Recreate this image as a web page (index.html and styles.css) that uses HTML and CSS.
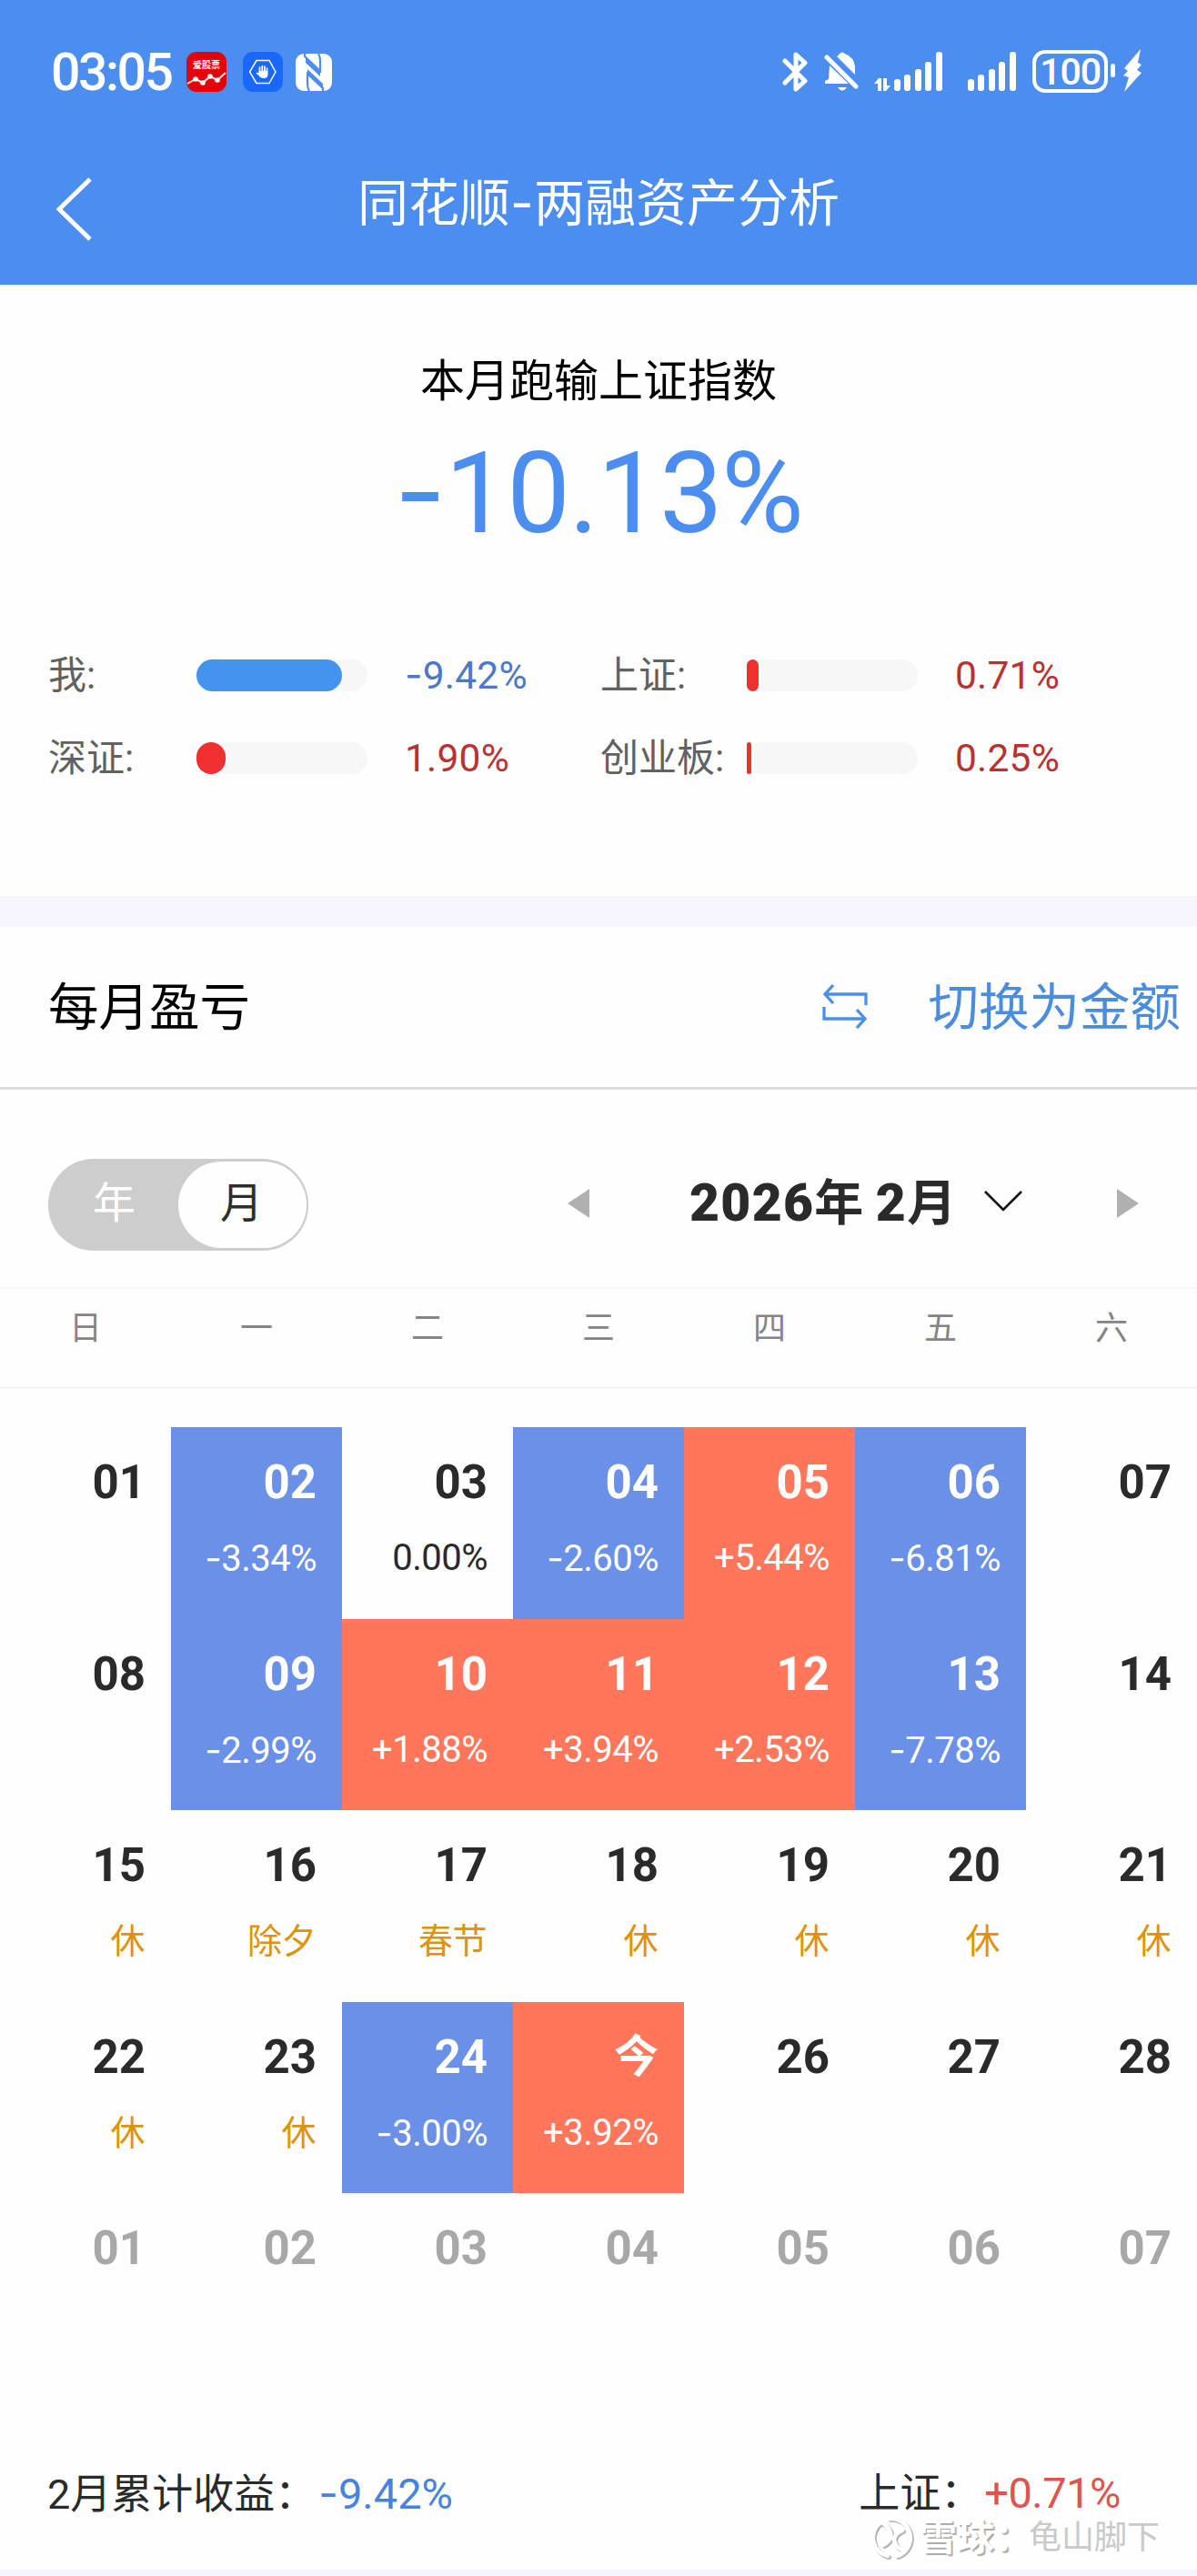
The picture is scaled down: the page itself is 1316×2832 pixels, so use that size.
FILE: index.html
```
<!DOCTYPE html>
<html lang="zh-CN">
<head>
    <meta charset="UTF-8">
    <title>同花顺-两融资产分析</title>
    <link rel="stylesheet" href="styles.css">
</head>
<body>
    <header class="header">
        <div class="status-bar">
            <span class="time">03:05</span>
            <svg class="app-icon" width="44" height="44" viewBox="0 0 44 44">
                <rect width="44" height="44" rx="11" fill="#e60009"/>
                <text x="22" y="18" class="app-name">爱股票</text>
                <path d="M1 35 L10 30 L18 34 L26 27 L34 31 L43 23" fill="none" stroke="#ffe9e4" stroke-width="2"/>
                <g fill="#fff"><circle cx="10" cy="30" r="2.8"/><circle cx="18" cy="34" r="2.8"/><circle cx="26" cy="27" r="2.8"/><circle cx="34" cy="31" r="2.8"/></g>
            </svg>
            <svg class="hand-icon" width="44" height="44" viewBox="0 0 44 44">
                <rect width="44" height="44" rx="11" fill="#1967fb"/>
                <path d="M15 9.500 H29 L36 22 L29 34.500 H15 L7.500 22Z" fill="none" stroke="#fff" stroke-width="1.500"/>
                <path d="M18.500 23 V17 M21.300 23 V15.500 M24 23 V16 M26.500 24 V18" stroke="#fff" stroke-width="1.700" stroke-linecap="round"/>
                <path d="M17.500 21 H27.400 V26 Q27 29 23 29 Q19 29 17.500 26 L14.500 23.500 Q15 22 17.500 23.500Z" fill="#fff"/>
            </svg>
            <svg class="nfc-icon" width="40" height="41" viewBox="0 0 40 41">
                <rect width="40" height="41" rx="9" fill="#fff"/>
                <path d="M10 0 V3 L27 19 V9 Q27 3 25 0 M30 41 V38 L13 22 V32 Q13 38 15 41" fill="none" stroke="#4b8eef" stroke-width="2.200"/>
                <path d="M11 4 L27 19 V25 L11 10Z M13 17 L30 33 V39 L13 23Z" fill="#4b8eef"/>
            </svg>
            <svg class="bluetooth" width="28" height="44" viewBox="0 0 28 44">
                <path d="M3 10 L25 32 L15 41 V3 L25 12 L3 34" fill="none" stroke="#fff" stroke-width="5" stroke-linecap="round" stroke-linejoin="round"/>
            </svg>
            <svg class="bell" width="38" height="44" viewBox="0 0 38 44">
                <path d="M14 5 Q16 4 17 2 Q20 -1 23 2 Q33 6 34 16 V25Z M6 15 L27 35 H1 V32 L5 30Z M15 39 H25 Q20 46 15 39Z" fill="#fff"/>
                <path d="M3 6 L35 38" stroke="#fff" stroke-width="5" stroke-linecap="round"/>
            </svg>
            <svg class="signal-data" width="77" height="44" viewBox="0 0 77 44">
                <path d="M1 35 L6 29 H9 V43 H5 V35Z M11 29 H15 V37 H19 L14 43 H11Z" fill="#fff"/>
                <g fill="#fff"><rect x="23" y="30" width="7" height="13" rx="3"/><rect x="34" y="25" width="7" height="18" rx="3"/><rect x="46" y="19" width="7" height="24" rx="3"/><rect x="57" y="11" width="7" height="32" rx="3"/><rect x="69" y="0" width="7" height="43" rx="3"/></g>
            </svg>
            <svg class="signal" width="54" height="44" viewBox="0 0 54 44">
                <g fill="#fff"><rect x="0" y="30" width="7" height="13" rx="3"/><rect x="11" y="25" width="7" height="18" rx="3"/><rect x="23" y="19" width="7" height="24" rx="3"/><rect x="34" y="11" width="7" height="32" rx="3"/><rect x="46" y="0" width="7" height="43" rx="3"/></g>
            </svg>
            <span class="battery">100</span>
            <span class="battery-tip"></span>
            <svg class="bolt" width="21" height="48" viewBox="0 0 21 48">
                <path d="M19 0 L1 21 L5 24 L0 29 L6 31 L1 47 L20 26 L15 23 L20 17 L16 15Z" fill="#fff"/>
            </svg>
        </div>
        <div class="nav-bar">
            <svg class="back" width="40" height="70" viewBox="0 0 40 70">
                <path d="M37 2 L3 35 L37 68" fill="none" stroke="#fff" stroke-width="5"/>
            </svg>
            <h1>同花顺<span class="minus">-</span>两融资产分析</h1>
        </div>
    </header>

    <section class="summary">
        <div class="summary-title">本月跑输上证指数</div>
        <div class="summary-value"><span class="minus">-</span>10.13%</div>
        <div class="compare">
            <span class="name">我:</span>
            <div class="bar"><div class="fill blue" style="width: 160px"></div></div>
            <span class="value down"><span class="minus">-</span>9.42%</span>
            <span class="name">上证:</span>
            <div class="bar"><div class="fill red" style="width: 13px"></div></div>
            <span class="value up">0.71%</span>
            <span class="name">深证:</span>
            <div class="bar"><div class="fill red" style="width: 32px"></div></div>
            <span class="value up">1.90%</span>
            <span class="name">创业板:</span>
            <div class="bar"><div class="fill red" style="width: 5px"></div></div>
            <span class="value up">0.25%</span>
        </div>
    </section>

    <section class="profit">
        <div class="section-head">
            <h2>每月盈亏</h2>
            <svg class="swap" width="50" height="50" viewBox="0 0 50 50">
                <path d="M12 2 L3 12 L12 22 M3 12 H48 V24 M38 29 L47 39 L38 49 M47 39 H2 V26" fill="none" stroke="#4a90e8" stroke-width="3.300"/>
            </svg>
            <span class="switch-text">切换为金额</span>
        </div>

        <div class="toolbar">
            <div class="toggle">
                <span>年</span>
                <span class="active">月</span>
            </div>
            <div class="arrow-left"></div>
            <div class="month"><b>2026</b>年 <b>2</b>月</div>
            <svg class="chevron" width="42" height="26" viewBox="0 0 42 26">
                <path d="M1 2 L21 22 L41 2" fill="none" stroke="#111" stroke-width="2.600"/>
            </svg>
            <div class="arrow-right"></div>
        </div>

        <div class="weekdays">
            <span>日</span><span>一</span><span>二</span><span>三</span><span>四</span><span>五</span><span>六</span>
        </div>

        <div class="calendar">
            <div class="day"><b>01</b></div>
            <div class="day loss"><b>02</b><span><i class="minus">-</i>3.34%</span></div>
            <div class="day"><b>03</b><span>0.00%</span></div>
            <div class="day loss"><b>04</b><span><i class="minus">-</i>2.60%</span></div>
            <div class="day gain"><b>05</b><span>+5.44%</span></div>
            <div class="day loss"><b>06</b><span><i class="minus">-</i>6.81%</span></div>
            <div class="day"><b>07</b></div>

            <div class="day"><b>08</b></div>
            <div class="day loss"><b>09</b><span><i class="minus">-</i>2.99%</span></div>
            <div class="day gain"><b>10</b><span>+1.88%</span></div>
            <div class="day gain"><b>11</b><span>+3.94%</span></div>
            <div class="day gain"><b>12</b><span>+2.53%</span></div>
            <div class="day loss"><b>13</b><span><i class="minus">-</i>7.78%</span></div>
            <div class="day"><b>14</b></div>

            <div class="day rest"><b>15</b><span>休</span></div>
            <div class="day rest"><b>16</b><span>除夕</span></div>
            <div class="day rest"><b>17</b><span>春节</span></div>
            <div class="day rest"><b>18</b><span>休</span></div>
            <div class="day rest"><b>19</b><span>休</span></div>
            <div class="day rest"><b>20</b><span>休</span></div>
            <div class="day rest"><b>21</b><span>休</span></div>

            <div class="day rest"><b>22</b><span>休</span></div>
            <div class="day rest"><b>23</b><span>休</span></div>
            <div class="day loss"><b>24</b><span><i class="minus">-</i>3.00%</span></div>
            <div class="day gain"><b class="today">今</b><span>+3.92%</span></div>
            <div class="day"><b>26</b></div>
            <div class="day"><b>27</b></div>
            <div class="day"><b>28</b></div>

            <div class="day other"><b>01</b></div>
            <div class="day other"><b>02</b></div>
            <div class="day other"><b>03</b></div>
            <div class="day other"><b>04</b></div>
            <div class="day other"><b>05</b></div>
            <div class="day other"><b>06</b></div>
            <div class="day other"><b>07</b></div>
        </div>

        <div class="total">
            <div class="total-mine">2月累计收益：<span class="total-down"><span class="minus">-</span>9.42%</span></div>
            <div class="total-index">上证：<span class="total-up">+0.71%</span></div>
        </div>
    </section>

    <div class="watermark">
        <svg width="50" height="50" viewBox="0 0 50 50">
            <g fill="none" stroke-linecap="round">
                <path d="M20 45 A21 21 0 0 1 12 8 M22 4 A21 21 0 0 1 30 45 M13 8 Q25 14 23 25 Q21 30 15 33 M36 17 Q28 20 27 27 Q28 36 38 39" stroke="#b5b5b5" stroke-width="5" transform="translate(1.500 1.500)"/>
                <path d="M20 45 A21 21 0 0 1 12 8 M22 4 A21 21 0 0 1 30 45 M13 8 Q25 14 23 25 Q21 30 15 33 M36 17 Q28 20 27 27 Q28 36 38 39" stroke="#fff" stroke-width="4.500"/>
            </g>
        </svg>
        <span class="brand">雪球：</span>
        <span class="author">龟山脚下</span>
    </div>
</body>
</html>
```
FILE: styles.css
```
* {
    box-sizing: border-box;
}

body {
    position: relative;
    width: 1316px;
    height: 2832px;
    margin: 0;
    overflow: hidden;
    background-color: #fefefe;
    color: #2a2a2a;
    font-family: Roboto, "Noto Sans CJK SC", sans-serif;
}

svg {
    display: block;
    flex: none;
}

.minus {
    font-family: Inter, sans-serif;
    font-style: normal;
}

.header {
    height: 313px;
    background-color: #4b8eef;
    color: #fff;
}

.status-bar {
    display: flex;
    align-items: flex-start;
    height: 157px;
    padding: 57px 60px 0 56px;
}

.time {
    width: 150px;
    margin-top: -7px;
    font-size: 57px;
    font-weight: 500;
    line-height: 60px;
    letter-spacing: -2.4px;
}

.app-name {
    fill: #fff;
    font-size: 10px;
    font-weight: bold;
    text-anchor: middle;
}

.hand-icon {
    margin-left: 18px;
}

.nfc-icon {
    margin: 2px 0 0 14px;
}

.bluetooth {
    margin-left: 495px;
}

.bell {
    margin-left: 18px;
}

.signal-data {
    margin-left: 16px;
}

.signal {
    margin-left: 27px;
}

.battery {
    width: 83px;
    height: 47px;
    margin: -2px 0 0 17px;
    border: 4px solid #fff;
    border-radius: 14px;
    font-size: 41px;
    font-weight: 500;
    line-height: 40px;
    letter-spacing: -1px;
    text-align: center;
}

.battery-tip {
    width: 5px;
    height: 15px;
    margin: 13px 0 0 3px;
    border-radius: 3px;
    background-color: #fff;
}

.bolt {
    margin: -3px 0 0 9px;
}

.nav-bar {
    display: grid;
    grid-template-columns: 60px 1fr 60px;
    height: 156px;
    padding: 30px 62px 0;
}

.back {
    margin-top: 8px;
}

.nav-bar h1 {
    margin: 0;
    font-size: 56px;
    font-weight: 400;
    line-height: 72px;
    text-align: center;
}

.summary {
    height: 672px;
    padding-top: 75px;
}

.summary-title {
    color: #000;
    font-size: 49px;
    line-height: 64px;
    text-align: center;
}

.summary-value {
    margin-top: 16px;
    color: #4b8eef;
    font-size: 124px;
    line-height: 144px;
    letter-spacing: -1.5px;
    text-align: center;
}

.compare {
    display: grid;
    grid-template-columns: 163px 188px 256px 161px 188px 1fr;
    grid-auto-rows: 91px;
    align-items: center;
    margin-top: 82px;
    padding-left: 53px;
}

.name {
    color: #616161;
    font-size: 42px;
    line-height: 56px;
    white-space: nowrap;
}

.bar {
    height: 35px;
    border-radius: 18px;
    background-color: #f7f7f7;
}

.fill {
    height: 35px;
    border-radius: 18px;
}

.blue {
    background-color: #4393ef;
}

.red {
    background-color: #f03030;
}

.value {
    padding-left: 41px;
    font-size: 42.5px;
    line-height: 56px;
    letter-spacing: 0.2px;
}

.down {
    color: #4c78c8;
}

.up {
    color: #b93232;
}

.profit {
    border-top: 34px solid #f7f6fe;
}

.section-head {
    display: flex;
    align-items: center;
    height: 179px;
    padding: 0 18px 9px 53px;
    border-bottom: 3px solid #dcdcdc;
}

.section-head h2 {
    margin: 0;
    color: #000;
    font-size: 55.5px;
    font-weight: 400;
}

.swap {
    margin: 6px 0 0 auto;
}

.switch-text {
    margin-left: 66px;
    color: #4a8cdd;
    font-size: 55.5px;
}

.toolbar {
    display: flex;
    align-items: flex-start;
    height: 219px;
    padding: 76px 0 0 53px;
    border-bottom: 2px solid #f7f7f7;
}

.toggle {
    display: flex;
    width: 286px;
    height: 101px;
    padding: 3px 2px 3px 0;
    border-radius: 50px;
    background-color: #cdcdcd;
    color: #fff;
    font-size: 47px;
    line-height: 92px;
}

.toggle span {
    width: 143px;
    padding-left: 2px;
    text-align: center;
}

.toggle .active {
    width: 141px;
    padding: 0 2px 0 0;
    border-radius: 48px;
    background-color: #fefefe;
    color: #2e2e2e;
}

.arrow-left,
.arrow-right {
    width: 0;
    height: 0;
    margin-top: 33px;
    border-top: 16px solid transparent;
    border-bottom: 16px solid transparent;
}

.arrow-left {
    margin-left: 285px;
    border-right: 24px solid #b0b0b0;
}

.arrow-right {
    margin-left: 104px;
    border-left: 24px solid #b0b0b0;
}

.month {
    width: 324px;
    margin: 14px 0 0 110px;
    font-size: 54px;
    font-weight: bold;
    line-height: 70px;
    white-space: nowrap;
}

.month b {
    font-size: 57px;
    letter-spacing: 1.3px;
}

.chevron {
    margin-top: 34px;
}

.weekdays {
    display: grid;
    grid-template-columns: repeat(7, 1fr);
    height: 110px;
    border-bottom: 3px solid #f7f7f7;
    color: #858585;
    font-size: 36px;
    line-height: 88px;
    text-align: center;
}

.calendar {
    display: grid;
    grid-template-columns: repeat(7, 1fr);
    grid-auto-rows: 210.5px;
    padding-top: 42px;
}

.day {
    display: flex;
    flex-direction: column;
    align-items: flex-end;
    padding: 31px 28px 0 0;
}

.day b {
    height: 60px;
    font-size: 51px;
    font-weight: 700;
    line-height: 60px;
}

.day span {
    margin-top: 29px;
    font-size: 40px;
    line-height: 48px;
    letter-spacing: -0.5px;
}

.loss {
    background-color: #6b90e7;
    color: #fff;
}

.gain {
    background-color: #ff765b;
    color: #fff;
}

.rest span {
    margin-right: 1px;
    color: #dc940c;
    font-size: 38px;
}

.day .today {
    margin-right: 0;
    font-size: 49px;
}

.other {
    color: #a8a8a8;
}

.total {
    display: flex;
    justify-content: space-between;
    height: 212px;
    margin-top: -1px;
    padding: 88px 84px 0 52px;
    border-bottom: 8px solid #f6f5fe;
    font-size: 45px;
    line-height: 64px;
}

.total-down,
.total-up {
    margin-left: 3px;
    font-size: 47px;
}

.total-down {
    color: #4683df;
}

.total-up {
    color: #e0534e;
    letter-spacing: -0.5px;
}

/* sits over the bottom of the page */
.watermark {
    position: absolute;
    top: 2765px;
    left: 956px;
    display: flex;
    align-items: center;
    height: 50px;
    line-height: 50px;
    white-space: nowrap;
}

.brand {
    width: 120px;
    margin-left: 5px;
    color: #fff;
    font-size: 41px;
    font-weight: bold;
    text-shadow: 2px 2px 1px #aaa;
}

.author {
    color: #c9c9c9;
    font-size: 36px;
}
```
